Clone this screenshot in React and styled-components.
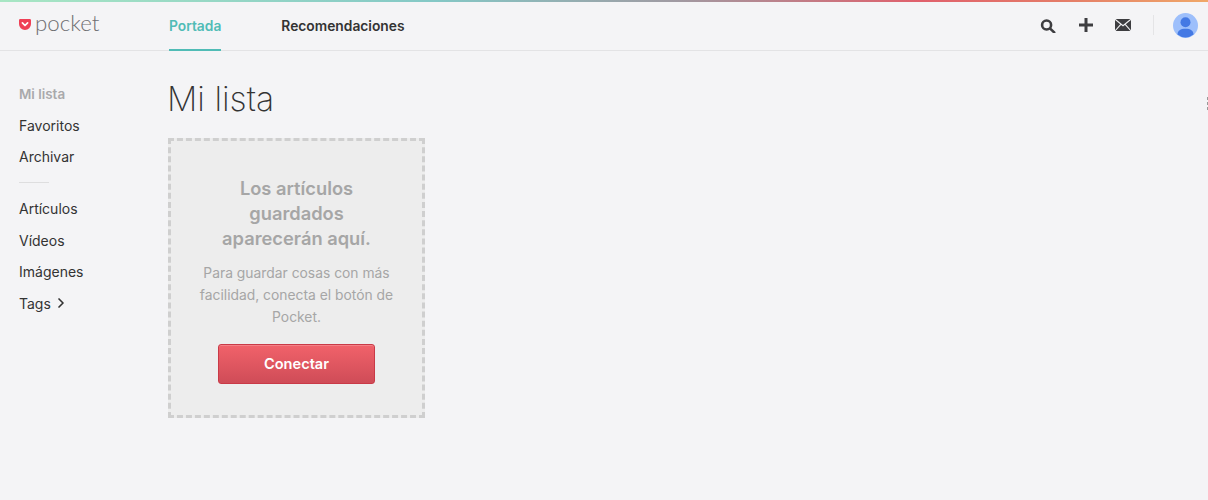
import React from "react";
import styled, { createGlobalStyle } from "styled-components";
import { ChevronRight } from "lucide-react";

const Global = createGlobalStyle`
  html, body { margin: 0; padding: 0; background: #f4f4f6; height: 100%; overflow: hidden; }
  body { font-family: Inter, Lato, "Liberation Sans", sans-serif; color: #333; }
`;

const Page = styled.div`
  position: relative;
  width: 1208px;
  height: 500px;
  overflow: hidden;
  background: #f4f4f6;
`;
const TopStripe = styled.div`
  height: 2px;
  background: linear-gradient(90deg, #a8e6c4 0%, #84c8c6 36%, #a09aa2 56%, #e0606c 76%, #e47c68 88%, #f0a868 100%);
`;
const Header = styled.header`
  height: 48px;
  display: flex;
  align-items: stretch;
  border-bottom: 1px solid #e3e3e5;
  padding: 0 10px 0 19px;
`;
const Logo = styled.div`
  display: flex;
  align-items: flex-start;
  width: 150px;
  padding-top: 10px;
  gap: 4px;
`;
const LogoMark = styled.svg`
  display: block;
  width: 12px;
  height: 11px;
  margin-top: 7px;
`;
const LogoWord = styled.span`
  font-family: Lato, sans-serif;
  font-weight: 300;
  font-size: 22.3px;
  line-height: 22px;
  color: #6f6f72;
`;
const Nav = styled.nav`
  display: flex;
  gap: 60px;
`;
const NavLink = styled.a`
  display: flex;
  align-items: center;
  font-size: 13.8px;
  font-weight: 600;
  color: ${(p) => (p.$active ? "#50bcb6" : "#333")};
  border-bottom: 2px solid ${(p) => (p.$active ? "#50bcb6" : "transparent")};
  margin-bottom: -1px;
`;
const Tools = styled.div`
  margin-left: auto;
  display: flex;
  align-items: center;
`;
const ToolIcon = styled.svg`
  display: block;
  width: 16px;
  height: 16px;
  margin: 0 ${(p) => p.$mr}px 2px 0;
`;
const Divider = styled.div`
  width: 1px;
  height: 20px;
  background: #e4e4e6;
  margin: 0 19px 2px 0;
`;
const Avatar = styled.svg`
  display: block;
  width: 25px;
  height: 25px;
  margin-bottom: 1px;
`;
const Body = styled.div`
  display: flex;
`;
const Side = styled.aside`
  width: 168px;
  padding: 27px 0 0 19px;
  box-sizing: border-box;
  font-size: 14px;
`;
const SideItem = styled.div`
  height: 31.6px;
  display: flex;
  align-items: center;
  gap: 2px;
  color: ${(p) => (p.$muted ? "#a9a9ab" : "#333")};
  font-weight: ${(p) => (p.$muted ? 600 : 400)};
  font-size: ${(p) => (p.$muted ? "13.4px" : "14px")};
`;
const SideRule = styled.hr`
  width: 30px;
  margin: 9.6px 0 9.4px;
  border: 0;
  border-top: 1px solid #dededf;
`;
const Main = styled.main`
  flex: 1;
`;
const Title = styled.h1`
  margin: 27px 0 18px -1px;
  font-size: 33.8px;
  line-height: 42px;
  font-weight: 200;
  color: #333;
`;
const EmptyCard = styled.section`
  box-sizing: border-box;
  width: 257px;
  height: 280px;
  background: #ededed;
  border: 3px dashed #cfcfcf;
  padding: 34.6px 20px 0;
  display: flex;
  flex-direction: column;
  align-items: center;
  text-align: center;
`;
const EmptyHead = styled.h2`
  margin: 0;
  max-width: 170px;
  font-size: 18.3px;
  line-height: 25.4px;
  font-weight: 600;
  color: #a6a6a6;
`;
const EmptyText = styled.p`
  margin: 10.6px 0 16px;
  font-size: 13.85px;
  line-height: 22px;
  color: #a6a6a6;
`;
const Connect = styled.button`
  box-sizing: border-box;
  width: 157px;
  height: 40px;
  flex: none;
  border: 1px solid #c93a47;
  border-radius: 3px;
  background: linear-gradient(180deg, #f1626a, #cf4c57);
  box-shadow: inset 0 1px 0 rgba(255,255,255,.2);
  color: #fff;
  font-family: inherit;
  font-weight: 600;
  font-size: 14.6px;
`;
const EdgeDots = styled.div`
  position: absolute;
  right: 0;
  top: 97px;
  width: 1px;
  height: 13px;
  background: repeating-linear-gradient(180deg, #999 0 3px, transparent 3px 5px);
`;

export default function App() {
  return (
    <Page>
      <Global />
      <TopStripe />
      <Header>
        <Logo>
          <LogoMark viewBox="0 0 12 11">
            <path d="M1.3 0h9.4A1.3 1.3 0 0 1 12 1.3V5A6 6 0 0 1 0 5V1.3A1.3 1.3 0 0 1 1.3 0z" fill="#ef4056" />
            <path d="M3.4 3.9 6 6.5 8.6 3.9" fill="none" stroke="#fff" strokeWidth="1.7" strokeLinecap="round" strokeLinejoin="round" />
          </LogoMark>
          <LogoWord>pocket</LogoWord>
        </Logo>
        <Nav>
          <NavLink $active>Portada</NavLink>
          <NavLink>Recomendaciones</NavLink>
        </Nav>
        <Tools>
          <ToolIcon $mr={22} viewBox="0 0 16 16">
            <circle cx="6.6" cy="8" r="4.5" fill="none" stroke="#3d3d40" strokeWidth="2.6" />
            <path d="M10.2 11.6 14.2 15.4" stroke="#3d3d40" strokeWidth="2.6" strokeLinecap="round" />
          </ToolIcon>
          <ToolIcon $mr={21} viewBox="0 0 16 16">
            <path d="M8 1v14M1 8h14" stroke="#3d3d40" strokeWidth="3" />
          </ToolIcon>
          <ToolIcon $mr={22} viewBox="0 0 16 16">
            <path d="M0 2h16v12H0z" fill="#3d3d40" />
            <path d="M0 2.3 8 8.8l8-6.5M0 14l5.6-6.4M16 14l-5.6-6.4" fill="none" stroke="#f4f4f6" strokeWidth="1.1" />
          </ToolIcon>
          <Divider />
          <Avatar viewBox="0 0 25 25">
            <circle cx="12.5" cy="12.5" r="12.5" fill="#9dbffb" />
            <circle cx="12.5" cy="9.3" r="5" fill="#4479e4" />
            <path d="M4.5 21.5c0-4 3-5.8 8-5.8s8 1.8 8 5.8a12.5 12.5 0 0 1-16 0z" fill="#4479e4" />
          </Avatar>
        </Tools>
      </Header>
      <Body>
        <Side>
          <SideItem $muted>Mi lista</SideItem>
          <SideItem>Favoritos</SideItem>
          <SideItem>Archivar</SideItem>
          <SideRule />
          <SideItem>Artículos</SideItem>
          <SideItem>Vídeos</SideItem>
          <SideItem>Imágenes</SideItem>
          <SideItem>
            Tags <ChevronRight size={16} strokeWidth={2.5} color="#333" />
          </SideItem>
        </Side>
        <Main>
          <Title>Mi lista</Title>
          <EmptyCard>
            <EmptyHead>Los artículos guardados aparecerán aquí.</EmptyHead>
            <EmptyText>Para guardar cosas con más facilidad, conecta el botón de Pocket.</EmptyText>
            <Connect>Conectar</Connect>
          </EmptyCard>
        </Main>
      </Body>
      <EdgeDots />
    </Page>
  );
}
